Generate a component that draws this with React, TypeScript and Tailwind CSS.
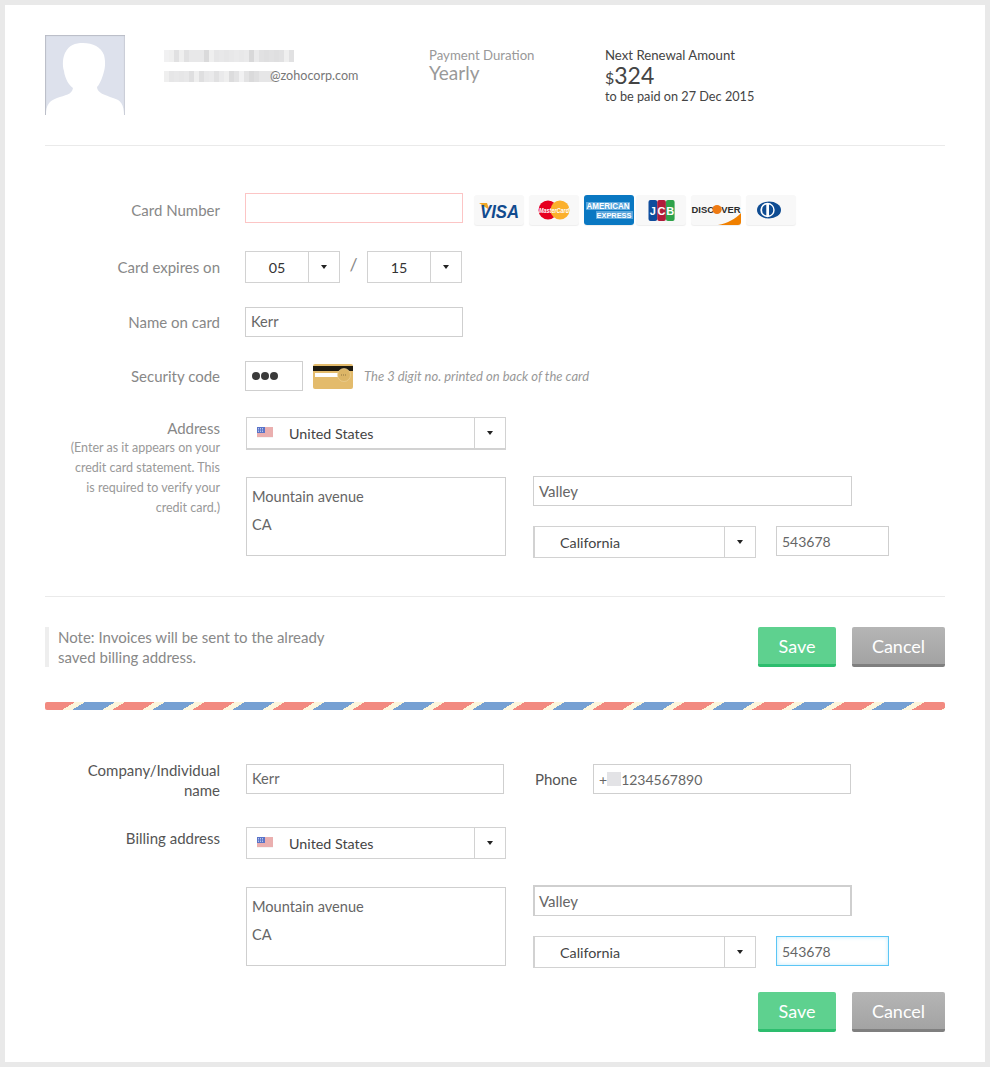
import React from 'react';

const fontFamily = "font-['Lato','Open_Sans',sans-serif]";

const nameBlur = [12, 10, 18, 14, 22, 12, 20, 16, 24, 14, 18, 12, 22, 16, 10, 20, 14, 26, 18, 22, 20, 26, 24, 18, 14, 22];
const mailBlur = [14, 18, 12, 22, 16, 20, 14, 24, 12, 18, 22, 10, 14, 26, 16, 12, 20, 24, 28, 18, 14, 22];

function Mosaic({ cells, className }: { cells: number[]; className: string }) {
  return (
    <span className={`flex ${className}`}>
      {cells.map((v, i) => (
        <span key={i} className="w-[5px] h-full bg-[#8c8c90]" style={{ opacity: (v + (i % 3) * 4) / 100 }} />
      ))}
    </span>
  );
}

function Caret() {
  return <span className="w-0 h-0 border-x-[3px] border-x-transparent border-t-[4px] border-t-[#222]" />;
}

function TextBox({ value, className }: { value: string; className: string }) {
  return (
    <div className={`flex items-center pl-[5px] border border-[#cfcfcf] text-[#666] ${className}`}>{value}</div>
  );
}

function Select({ className, caretWidth, children }: { className: string; caretWidth: string; children: React.ReactNode }) {
  return (
    <div className={`flex items-stretch border border-[#d2d2d2] text-[14.3px] text-[#444] ${className}`}>
      <div className="flex-1 flex items-center min-w-0 pt-[1px]">{children}</div>
      <div className={`flex items-center justify-center border-l border-[#d2d2d2] ${caretWidth}`}>
        <Caret />
      </div>
    </div>
  );
}

function Flag() {
  return (
    <svg width="16" height="11" viewBox="0 0 16 11">
      <rect width="16" height="11" fill="#f4f4f4" />
      <path d="M0 1h16M0 3h16M0 5h16M0 7h16M0 9h16" stroke="#e06a6a" strokeWidth="1" />
      <rect width="8" height="6" fill="#5b74c8" />
      <path d="M1 1.5h6M1 3h6M1 4.5h6" stroke="#dfe6fb" strokeWidth="0.7" strokeDasharray="1 1" />
    </svg>
  );
}

function CardLogo({ className, children }: { className: string; children: React.ReactNode }) {
  return (
    <div className={`w-[50px] h-[30px] rounded-[3px] overflow-hidden bg-[#f8f8f8] shadow-[0_1px_1px_#eeeeee] ${className}`}>
      <svg width="50" height="30" viewBox="0 0 50 30">{children}</svg>
    </div>
  );
}

function CardLogos() {
  return (
    <div className="flex ml-[11px] mt-[2px] h-[28px]">
      <CardLogo className="">
        <path d="M5 8h8l2.5 7z" fill="#f0a629" />
        <text x="6" y="23" fontSize="19" fontWeight="700" fontStyle="italic" fill="#124b8e" fontFamily="Liberation Sans" textLength="39" lengthAdjust="spacingAndGlyphs">VISA</text>
      </CardLogo>
      <CardLogo className="ml-[5px]">
        <circle cx="19" cy="15" r="9.5" fill="#e6001f" />
        <circle cx="31" cy="15" r="9.5" fill="#fbb02c" />
        <text x="10" y="17.5" fontSize="7" fontWeight="700" fontStyle="italic" fill="#fff" fontFamily="Liberation Sans" textLength="30" lengthAdjust="spacingAndGlyphs">MasterCard</text>
      </CardLogo>
      <CardLogo className="ml-[5px]">
        <rect width="50" height="30" fill="#0a78c2" />
        <rect x="2" y="7" width="44" height="8" fill="#5aa6dc" />
        <rect x="12" y="16" width="37" height="8" fill="#5aa6dc" />
        <text x="2.5" y="14" fontSize="8.5" fontWeight="700" fill="#ffffff" fontFamily="Liberation Sans" textLength="43" lengthAdjust="spacingAndGlyphs">AMERICAN</text>
        <text x="12.5" y="23" fontSize="7.5" fontWeight="700" fill="#ffffff" fontFamily="Liberation Sans" textLength="35" lengthAdjust="spacingAndGlyphs">EXPRESS</text>
      </CardLogo>
      <CardLogo className="ml-[2px]">
        <rect x="12.5" y="5" width="8.7" height="21" rx="2" fill="#0f4c9c" />
        <rect x="21.2" y="5" width="8.7" height="21" rx="2" fill="#b01c3a" />
        <rect x="29.9" y="5" width="8.7" height="21" rx="2" fill="#2ea24a" />
        <text x="16.8" y="20" textAnchor="middle" fontSize="11" fontWeight="700" fill="#fff" fontFamily="Liberation Sans">J</text>
        <text x="25.5" y="20" textAnchor="middle" fontSize="11" fontWeight="700" fill="#fff" fontFamily="Liberation Sans">C</text>
        <text x="34.2" y="20" textAnchor="middle" fontSize="11" fontWeight="700" fill="#fff" fontFamily="Liberation Sans">B</text>
      </CardLogo>
      <CardLogo className="ml-[5px]">
        <path d="M50 18v12H27C37 28 44 24 50 18z" fill="#f08000" />
        <text x="0.5" y="18" fontSize="9.4" fontWeight="700" fill="#2b2b2b" fontFamily="Liberation Sans">DISCOVER</text>
        <circle cx="26" cy="14.5" r="4.6" fill="#ee7a12" />
      </CardLogo>
      <CardLogo className="ml-[5px]">
        <ellipse cx="23" cy="15" rx="12" ry="8.5" fill="#0f4c92" />
        <circle cx="21.5" cy="15" r="7.2" fill="#fff" />
        <path d="M20.3 9.5v11a5.7 5.7 0 0 1 0-11zM23 9.5v11a5.7 5.7 0 0 0 0-11z" fill="#0f4c92" />
      </CardLogo>
    </div>
  );
}

function AddressBlock({ valleyClass, textareaOffset, zipClass }: { valleyClass: string; textareaOffset: string; zipClass: string }) {
  return (
    <div className="flex items-start">
      <div className={`w-[260px] h-[79px] border border-[#cfcfcf] pl-[5px] pt-[5px] text-[14.6px] leading-[28px] text-[#666] ${textareaOffset}`}>
        <div>Mountain avenue</div>
        <div>CA</div>
      </div>
      <div className="ml-[27px]">
        <TextBox value="Valley" className={valleyClass} />
        <div className="flex items-start mt-[20px]">
          <Select className="w-[223px] h-[32px] border-l-2" caretWidth="w-[31px]">
            <span className="pl-[25px]">California</span>
          </Select>
          <TextBox value="543678" className={`w-[113px] h-[30px] ml-[20px] text-[14px] ${zipClass}`} />
        </div>
      </div>
    </div>
  );
}

function CountrySelect({ className }: { className: string }) {
  return (
    <Select className={`w-[260px] ${className}`} caretWidth="w-[31px]">
      <span className="ml-[10px] flex -mt-[3px]">
        <Flag />
      </span>
      <span className="ml-[16px]">United States</span>
    </Select>
  );
}

function Buttons() {
  return (
    <div className="flex justify-end gap-[16px] text-[18px] text-white">
      <button className="w-[78px] h-[40px] rounded-[2px] bg-[#5ed18f] border-b-[3px] border-[#2dbd6e] pt-[2px]">Save</button>
      <button className="w-[93px] h-[40px] rounded-[2px] bg-gradient-to-b from-[#b5b5b5] to-[#a3a3a3] border-b-[3px] border-[#7f7f7f] pt-[2px]">Cancel</button>
    </div>
  );
}

export default function App() {
  return (
    <div className={`min-h-[1067px] bg-[#e9e9e9] p-[5px] ${fontFamily}`}>
      <div className="h-[1057px] bg-white px-[40px] pt-[30px]">
        {/* Account summary */}
        <header className="flex h-[111px] border-b border-[#eaeaea]">
          <div className="w-[80px] h-[80px] bg-[#dde1ec] shadow-[inset_1px_1px_1px_#b9bcc6,inset_-1px_0_1px_#c9ccd6]">
            <svg width="80" height="80" viewBox="0 0 80 80">
              <path d="M1 80C1 70 4 66 12 63C20 60 27 60 28 53C24 50 20 44 19 36C17 30 18 22 20 18C24 10 30 8 38 8C48 8 56 12 59 20C61 28 60 34 58 40C56 46 54 50 52 52C52 58 60 60 68 63C76 65 79 70 79 80Z" fill="#ffffff" />
            </svg>
          </div>
          <div className="w-[265px] ml-[39px] pt-[15px] text-[12.6px] text-[#777]">
            <Mosaic cells={nameBlur} className="h-[12px]" />
            <div className="flex items-center h-[20px] mt-[4px]">
              <Mosaic cells={mailBlur} className="h-[11px]" />
              <span className="-ml-[4px]">@zohocorp.com</span>
            </div>
          </div>
          <div className="w-[176px] pt-[12px] text-[#999]">
            <div className="text-[13.2px] leading-[16px]">Payment Duration</div>
            <div className="text-[19px] leading-[20px]">Yearly</div>
          </div>
          <div className="pt-[12px] text-[#444]">
            <div className="text-[13.2px] leading-[16px]">Next Renewal Amount</div>
            <div className="h-[27px] leading-[27px] text-[23px] -mt-[1px]">
              <span className="text-[16px]">$</span>324
            </div>
            <div className="text-[12.7px] leading-[14px]">to be paid on 27 Dec 2015</div>
          </div>
        </header>

        {/* Card details */}
        <section className="text-[15px] text-[#888]">
          <div className="flex items-start mt-[47px]">
            <label className="w-[175px] pt-[6px] text-right">Card Number</label>
            <div className="ml-[25px] w-[218px] h-[30px] border border-[#fcc5c5]" />
            <CardLogos />
          </div>

          <div className="flex items-center mt-[28px] h-[32px]">
            <label className="w-[175px] text-right">Card expires on</label>
            <Select className="ml-[25px] w-[95px] h-[32px]" caretWidth="w-[31px]">
              <span className="flex-1 text-center text-[#333]">05</span>
            </Select>
            <span className="w-[27px] text-center text-[18px] -mt-[6px]">/</span>
            <Select className="w-[95px] h-[32px]" caretWidth="w-[31px]">
              <span className="flex-1 text-center text-[#333]">15</span>
            </Select>
          </div>

          <div className="flex items-center mt-[24px]">
            <label className="w-[175px] text-right">Name on card</label>
            <TextBox value="Kerr" className="ml-[25px] w-[218px] h-[30px] text-[14.6px]" />
          </div>

          <div className="flex items-center mt-[24px]">
            <label className="w-[175px] text-right">Security code</label>
            <div className="flex items-center gap-[1px] ml-[25px] pl-[6px] w-[58px] h-[30px] border border-[#cfcfcf]">
              <span className="w-[8px] h-[8px] rounded-full bg-[#3a3a3a]" />
              <span className="w-[8px] h-[8px] rounded-full bg-[#3a3a3a]" />
              <span className="w-[8px] h-[8px] rounded-full bg-[#3a3a3a]" />
            </div>
            <div className="ml-[10px] w-[40px] h-[25px] rounded-[2px] overflow-hidden">
              <svg width="40" height="25" viewBox="0 0 40 25">
                <rect width="40" height="25" fill="#e3bb6c" />
                <rect y="2" width="40" height="5" fill="#1e1a10" />
                <rect x="2" y="9" width="26" height="4" fill="#ffffff" />
                <circle cx="31" cy="11" r="6.5" fill="#dcb566" stroke="#efd79f" strokeWidth="0.6" />
                <path d="M28 11h6" stroke="#8d7440" strokeWidth="1" strokeDasharray="1 1" />
              </svg>
            </div>
            <span className="ml-[11px] pt-[2px] text-[13px] italic text-[#999]">The 3 digit no. printed on back of the card</span>
          </div>

          <div className="flex items-start mt-[26px] pb-[38px] border-b border-[#eaeaea]">
            <div className="w-[175px] text-right">
              <div className="leading-[22px]">Address</div>
              <div className="text-[12.5px] leading-[20px] text-[#999] -mt-[1px]">
                (Enter as it appears on your<br />credit card statement. This<br />is required to verify your<br />credit card.)
              </div>
            </div>
            <div className="ml-[26px]">
              <CountrySelect className="h-[33px] border-b-2" />
              <div className="mt-[26px]">
                <AddressBlock valleyClass="w-[319px] h-[30px] text-[15px]" textareaOffset="mt-[1px]" zipClass="" />
              </div>
            </div>
          </div>
        </section>

        {/* Note and actions */}
        <div className="flex items-start justify-between mt-[30px]">
          <p className="w-[300px] h-[40px] pl-[9px] border-l-4 border-[#eeeeee] text-[15px] leading-[20px] text-[#888]">
            Note: Invoices will be sent to the already saved billing address.
          </p>
          <Buttons />
        </div>

        <div className="h-[8px] mt-[35px] rounded-[2px] bg-[repeating-linear-gradient(148.4deg,#f28a80_0,#f28a80_15.7px,#fdf6dc_15.7px,#fdf6dc_20.95px,#76a0d3_20.95px,#76a0d3_36.67px,#fdf6dc_36.67px,#fdf6dc_41.9px)]" />

        {/* Billing details */}
        <section className="text-[15px] text-[#555]">
          <div className="flex items-start mt-[54px]">
            <label className="w-[175px] -mt-[4px] text-right leading-[20px]">Company/Individual<br />name</label>
            <TextBox value="Kerr" className="ml-[26px] w-[258px] h-[30px] text-[14.6px]" />
            <label className="ml-[31px] w-[58px] leading-[30px]">Phone</label>
            <div className="flex items-center pl-[5px] w-[258px] h-[30px] border border-[#cfcfcf] text-[14px] text-[#666]">
              <span>+</span>
              <span className="w-[14px] h-[14px] bg-[#e3e3e6]" />
              <span>1234567890</span>
            </div>
          </div>

          <div className="flex items-start mt-[27px]">
            <label className="w-[175px] text-right leading-[22px]">Billing address</label>
            <div className="ml-[26px]">
              <CountrySelect className="h-[32px]" />
              <div className="mt-[26px]">
                <AddressBlock valleyClass="w-[319px] h-[31px] text-[15px] border-t-2 border-x-2 pl-[4px]!" textareaOffset="mt-[2px]" zipClass="border-[#5cc6f5]! shadow-[inset_0_0_4px_#bfe9fb]" />
              </div>
            </div>
          </div>

          <div className="mt-[24px]">
            <Buttons />
          </div>
        </section>
      </div>
    </div>
  );
}
